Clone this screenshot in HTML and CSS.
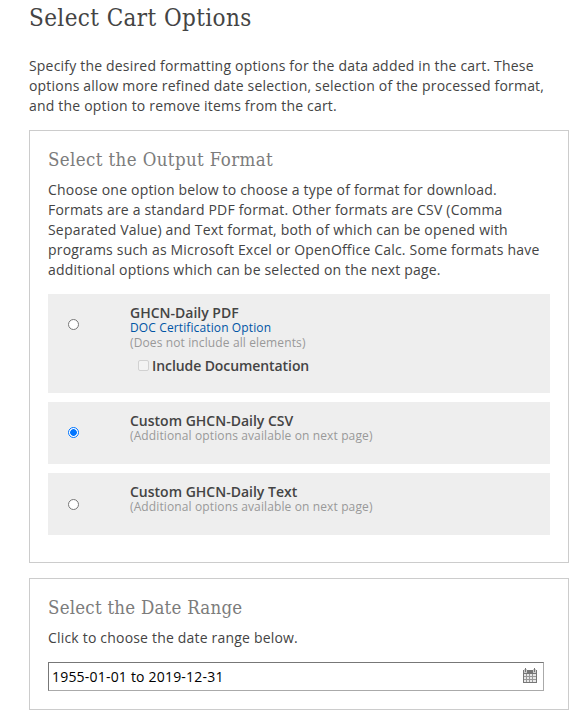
FILE: index.html
```html
<!DOCTYPE html>
<html lang="en">
<head>
<meta charset="utf-8">
<title>Select Cart Options</title>
<link rel="stylesheet" href="styles.css">
</head>
<body>
<main class="page">
  <h1 class="title">Select Cart Options</h1>
  <p class="intro">Specify the desired formatting options for the data added in the cart. These<br>options allow more refined date selection, selection of the processed format,<br>and the option to remove items from the cart.</p>

  <section class="panel panel-format">
    <h2 class="heading">Select the Output Format</h2>
    <p class="text">Choose one option below to choose a type of format for download.<br>Formats are a standard PDF format. Other formats are CSV (Comma<br>Separated Value) and Text format, both of which can be opened with<br>programs such as Microsoft Excel or OpenOffice Calc. Some formats have<br>additional options which can be selected on the next page.</p>
    <div class="options">
      <div class="option option-tall">
        <span class="radio"></span>
        <div class="details">
          <div class="name">GHCN-Daily PDF</div>
          <a class="link">DOC Certification Option</a>
          <div class="note">(Does not include all elements)</div>
          <div class="include"><span class="check"></span><span class="name name-include">Include Documentation</span></div>
        </div>
      </div>
      <div class="option">
        <span class="radio radio-on"></span>
        <div class="details">
          <div class="name">Custom GHCN-Daily CSV</div>
          <div class="note">(Additional options available on next page)</div>
        </div>
      </div>
      <div class="option option-last">
        <span class="radio"></span>
        <div class="details">
          <div class="name">Custom GHCN-Daily Text</div>
          <div class="note">(Additional options available on next page)</div>
        </div>
      </div>
    </div>
  </section>

  <section class="panel panel-date">
    <h2 class="heading">Select the Date Range</h2>
    <p class="text">Click to choose the date range below.</p>
    <div class="field">
      <span>1955-01-01 to 2019-12-31</span>
      <svg class="calendar" width="14" height="15" viewBox="0 0 14 15">
        <path fill="#777" d="M0 2h14v13H0z"/>
        <path fill="#e8e8e8" d="M1 6h12v8H1z"/>
        <path stroke="#999" d="M3.500 6v8M6.500 6v8M9.500 6v8M1 8.500h12M1 11.500h12"/>
        <path stroke="#ccc" stroke-width="3" d="M2.500 1v4M11.500 1v4"/>
        <path stroke="#777" d="M2.500 0v4M11.500 0v4"/>
      </svg>
    </div>
  </section>
</main>
</body>
</html>
```
FILE: styles.css
```css
* { box-sizing: border-box; }
body { margin: 0; background: #fff; color: #444; font: 14px/20px "Open Sans", sans-serif; }
h1, h2, p { margin: 0; font-weight: normal; white-space: nowrap; }
.page { width: 569px; padding-left: 29px; }
.title { height: 56px; padding-top: 2px; font: 24px/32px "DejaVu Serif Condensed", "DejaVu Serif", serif; font-stretch: condensed; letter-spacing: 0.4px; }
.intro, .text { letter-spacing: 0.19px; }
.intro { height: 74px; }
.panel { border: 1px solid #ccc; padding: 16px 18px 0; }
.panel-format { height: 433px; }
.panel-date { height: 132px; margin-top: 15px; }
.heading { height: 33px; color: #7c7c7c; font: 18.5px/25px "DejaVu Serif Condensed", "DejaVu Serif", serif; font-stretch: condensed; letter-spacing: 0.4px; }
.panel-date .heading { letter-spacing: 0.24px; }
.options { display: flex; flex-direction: column; gap: 9px; margin-top: 14px; }
.option { display: flex; align-items: flex-start; height: 62px; background: #eee; padding: 11px 20px; }
.option-tall { height: 99px; }
.radio { width: 11px; height: 11px; margin: 14px 51px 0 0; border: 1px solid #767676; border-radius: 50%; background: #fff; }
.option-last .radio { margin-top: 15px; }
.radio-on { border-color: #0075ff; background: radial-gradient(circle, #0075ff 3px, #fff 3.7px); }
.details { white-space: nowrap; font-size: 12px; line-height: 15px; }
.name { font-size: 14px; line-height: 15px; font-weight: 600; }
.name-include { letter-spacing: -0.08px; }
.link { display: block; color: #0055a5; letter-spacing: 0.12px; }
.note { color: #999; letter-spacing: 0.12px; }
.include { display: flex; align-items: center; gap: 3px; padding-left: 8px; margin-top: 8px; }
.check { width: 11px; height: 11px; border: 1px solid #d1d1d1; border-radius: 2px; background: #f3f3f3; }
.field { display: flex; align-items: center; justify-content: space-between; width: 496px; height: 29px; margin-top: 14px; padding: 0 6px 0 3px; border: 1px solid #aaa; border-top-color: #777; border-left-color: #777; color: #000; letter-spacing: 0.2px; }
.calendar { margin-top: -2px; }
```
